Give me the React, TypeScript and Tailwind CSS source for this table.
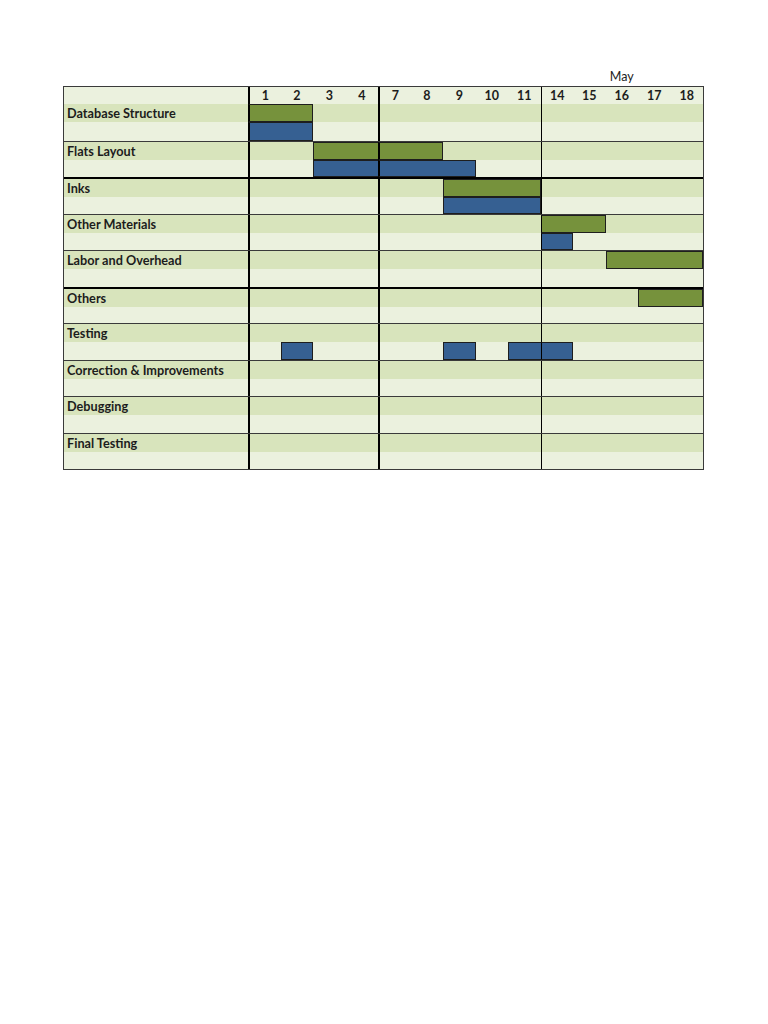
type Span = [number, number]

type Task = {
  name: string
  green: Span[]
  blue: Span[]
  thickTop?: boolean
}

const days = [1, 2, 3, 4, 7, 8, 9, 10, 11, 14, 15, 16, 17, 18]

const tasks: Task[] = [
  { name: "Database Structure", green: [[0, 1]], blue: [[0, 1]] },
  { name: "Flats Layout", green: [[2, 5]], blue: [[2, 6]] },
  { name: "Inks", green: [[6, 8]], blue: [[6, 8]], thickTop: true },
  { name: "Other Materials", green: [[9, 10]], blue: [[9, 9]] },
  { name: "Labor and Overhead", green: [[11, 13]], blue: [] },
  { name: "Others", green: [[12, 13]], blue: [], thickTop: true },
  { name: "Testing", green: [], blue: [[1, 1], [6, 6], [8, 9]] },
  { name: "Correction & Improvements", green: [], blue: [] },
  { name: "Debugging", green: [], blue: [] },
  { name: "Final Testing", green: [], blue: [] },
]

const grid = "grid grid-cols-[184px_repeat(14,minmax(0,1fr))]"

function sepClass(i: number) {
  if (i === 0 || i === 4) return "border-l-2 border-l-black"
  if (i === 9) return "border-l border-l-black"
  return ""
}

function Cell({ i, spans, color }: { i: number; spans: Span[]; color: string }) {
  const span = spans.find(([a, b]) => i >= a && i <= b)
  const sep = sepClass(i)
  if (!span) return <div className={sep} />
  const start = i === span[0]
  const end = i === span[1]
  return (
    <div
      className={[
        color,
        "border-y border-y-[#1e1e1e]",
        sep || (start ? "border-l border-l-[#1e1e1e]" : ""),
        end ? "border-r border-r-[#1e1e1e]" : "",
      ].join(" ")}
    />
  )
}

function Row({ label, spans, color, bg }: { label?: string; spans: Span[]; color: string; bg: string }) {
  return (
    <div className={`${grid} flex-1 ${bg}`}>
      <div className="pl-[3px] text-[12.7px] font-bold leading-[18px] text-[#1c1c1c] whitespace-nowrap">{label}</div>
      {days.map((d, i) => (
        <Cell key={d} i={i} spans={spans} color={color} />
      ))}
    </div>
  )
}

export default function App() {
  return (
    <div className="min-h-screen bg-white pl-[63px] pt-[68px]" style={{ fontFamily: "Lato, 'Liberation Sans', sans-serif" }}>
      <div className={`${grid} w-[641px] h-[18px] px-px`}>
        <div />
        {days.map((d) => (
          <div key={d} className="text-center text-[12.5px] leading-[18px] text-[#222222]">
            {d === 16 ? "May" : ""}
          </div>
        ))}
      </div>
      <div className="w-[641px] border border-[#3a3a3a]">
        <div className={`${grid} h-[17px] bg-[#ebf1de]`}>
          <div />
          {days.map((d, i) => (
            <div key={d} className={`${sepClass(i)} text-center text-[12.5px] font-bold leading-[17px] text-[#1c1c1c]`}>
              {d}
            </div>
          ))}
        </div>
        {tasks.map((t, k) => (
          <div
            key={t.name}
            className={`flex flex-col h-[36.5px] ${k === 0 ? "" : t.thickTop ? "border-t-2 border-t-black" : "border-t border-t-[#3a3a3a]"}`}
          >
            <Row label={t.name} spans={t.green} color="bg-[#76923c]" bg="bg-[#d8e4bc]" />
            <Row spans={t.blue} color="bg-[#366092]" bg="bg-[#ebf1de]" />
          </div>
        ))}
      </div>
    </div>
  )
}
